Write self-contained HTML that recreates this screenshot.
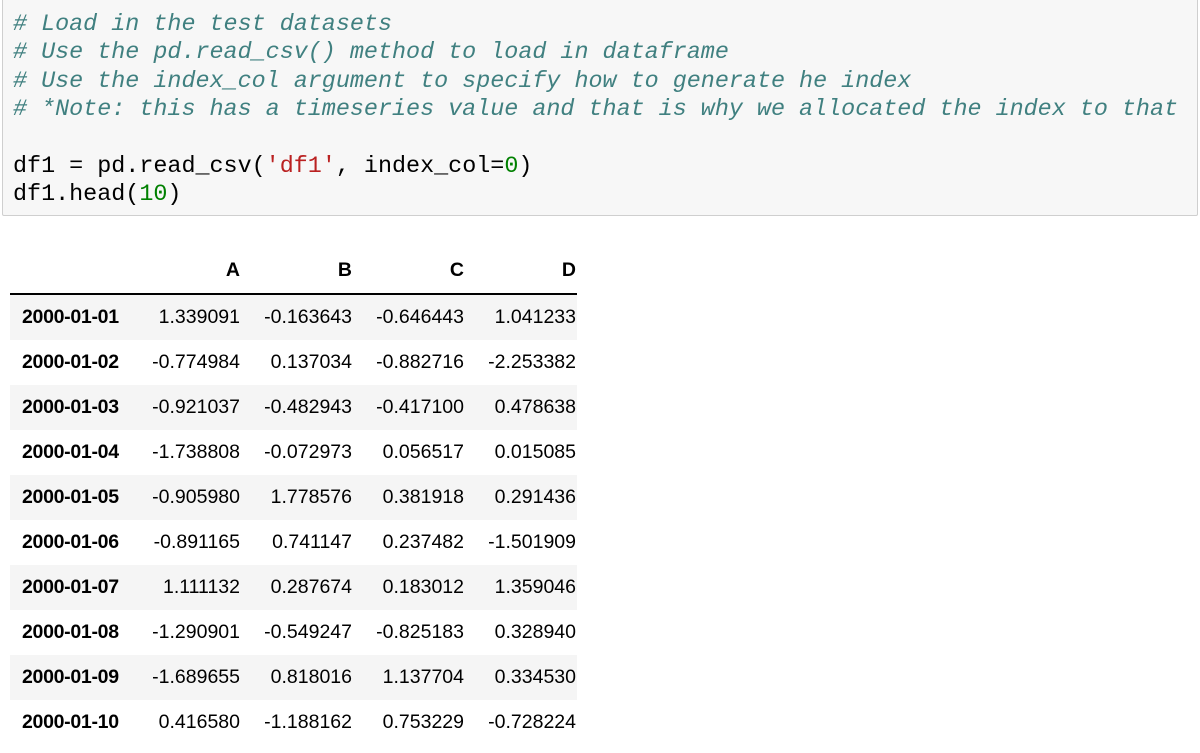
<!DOCTYPE html>
<html><head><style>
body{margin:0;width:1200px;height:753px;background:#fff;overflow:hidden;}
.code{position:absolute;left:2px;top:-2px;width:1196px;height:218px;background:#f7f7f7;border:1px solid #cfcfcf;border-radius:2px;box-sizing:border-box;}
.code pre{margin:0;position:absolute;left:10px;top:12px;font-family:"Liberation Mono",monospace;font-size:23.4px;line-height:28.4px;color:#000;}
.c{color:#408080;font-style:italic}
.s{color:#ba2121}
.n{color:#008000}
table{position:absolute;left:10px;top:248px;border-collapse:collapse;font-family:"Liberation Sans",Arial,sans-serif;font-size:19.5px;color:#000;}
th,td{text-align:right;padding:0;height:45px;}
thead th{height:45px;border-bottom:2px solid #000;font-weight:bold;}
tbody th{text-align:left;padding-left:12px;font-weight:bold;width:106px;letter-spacing:-0.3px;}
td{width:112px;}
td:last-child{padding-right:1px;width:112px;}
tbody tr:nth-child(odd){background:#f5f5f5;}
</style></head><body>
<div class="code"><pre><span class="c"># Load in the test datasets
# Use the pd.read_csv() method to load in dataframe
# Use the index_col argument to specify how to generate he index
# *Note: this has a timeseries value and that is why we allocated the index to that</span>

df1 = pd.read_csv(<span class="s">'df1'</span>, index_col=<span class="n">0</span>)
df1.head(<span class="n">10</span>)</pre></div>
<table>
<thead><tr><th></th><th>A</th><th>B</th><th>C</th><th style="padding-right:1px">D</th></tr></thead>
<tbody>
<tr><th>2000-01-01</th><td>1.339091</td><td>-0.163643</td><td>-0.646443</td><td>1.041233</td></tr>
<tr><th>2000-01-02</th><td>-0.774984</td><td>0.137034</td><td>-0.882716</td><td>-2.253382</td></tr>
<tr><th>2000-01-03</th><td>-0.921037</td><td>-0.482943</td><td>-0.417100</td><td>0.478638</td></tr>
<tr><th>2000-01-04</th><td>-1.738808</td><td>-0.072973</td><td>0.056517</td><td>0.015085</td></tr>
<tr><th>2000-01-05</th><td>-0.905980</td><td>1.778576</td><td>0.381918</td><td>0.291436</td></tr>
<tr><th>2000-01-06</th><td>-0.891165</td><td>0.741147</td><td>0.237482</td><td>-1.501909</td></tr>
<tr><th>2000-01-07</th><td>1.111132</td><td>0.287674</td><td>0.183012</td><td>1.359046</td></tr>
<tr><th>2000-01-08</th><td>-1.290901</td><td>-0.549247</td><td>-0.825183</td><td>0.328940</td></tr>
<tr><th>2000-01-09</th><td>-1.689655</td><td>0.818016</td><td>1.137704</td><td>0.334530</td></tr>
<tr><th>2000-01-10</th><td>0.416580</td><td>-1.188162</td><td>0.753229</td><td>-0.728224</td></tr>
</tbody></table>
</body></html>
